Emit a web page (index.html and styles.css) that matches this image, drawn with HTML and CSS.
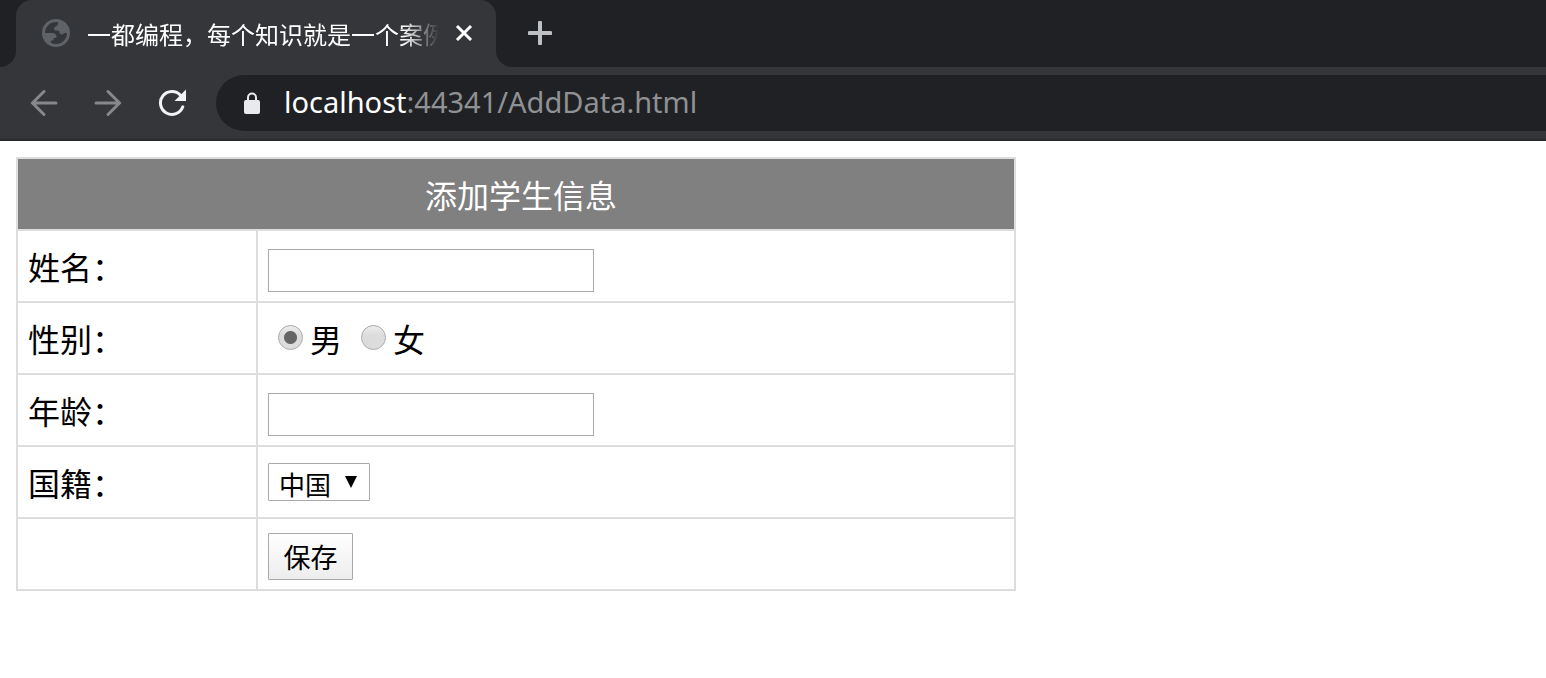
FILE: index.html
```html
<!DOCTYPE html>
<html lang="zh-CN">
<head>
<meta charset="utf-8">
<title>添加学生信息</title>
<link rel="stylesheet" href="styles.css">
</head>
<body>
<header class="browser">
  <div class="tabs">
    <div class="tabs-start"></div>
    <div class="tab-slot">
      <div class="tab">
        <svg class="globe" viewBox="0 0 28 28" aria-hidden="true">
          <circle cx="14" cy="14" r="12.500" fill="none" stroke="#5f6368" stroke-width="3"/>
          <path d="M16 2V4Q16 7 13.500 7.500Q12 8 12 10Q12 11.500 14 11.500H16Q17.500 11.500 17.500 13Q17.500 15.500 20 15.500Q21 15.500 21.500 14.500Q22 14 23 14H26A12 12 0 0 0 16 2Z" fill="#5f6368"/>
          <path d="M2 14H10Q14.500 14 14.500 18Q14.500 19 13 19H12Q11.500 19 11.500 20V21.500H9V25Q3 22 2 14Z" fill="#5f6368"/>
        </svg>
        <span class="tab-title">一都编程，每个知识就是一个案例</span>
        <button class="icon-button" aria-label="关闭标签页">
          <svg width="18" height="18" viewBox="0 0 18 18"><path d="M2 2 16 16M16 2 2 16" stroke="#fff" stroke-width="3"/></svg>
        </button>
      </div>
    </div>
    <div class="tabs-rest">
      <button class="icon-button" aria-label="新标签页">
        <svg width="24" height="24" viewBox="0 0 24 24"><path d="M12 1.500V22.500M1.500 12H22.500" stroke="#bdc1c6" stroke-width="4" stroke-linecap="round"/></svg>
      </button>
    </div>
  </div>
  <nav class="toolbar">
    <button class="icon-button" aria-label="后退">
      <svg width="28" height="28" viewBox="0 0 28 28"><path d="M26 14H3M14 2.500 2.500 14 14 25.500" fill="none" stroke="#86888a" stroke-width="3" stroke-linecap="round"/></svg>
    </button>
    <button class="icon-button" aria-label="前进">
      <svg width="28" height="28" viewBox="0 0 28 28"><path d="M2 14H25M14 2.500 25.500 14 14 25.500" fill="none" stroke="#86888a" stroke-width="3" stroke-linecap="round"/></svg>
    </button>
    <button class="icon-button" aria-label="重新加载">
      <svg width="28" height="28" viewBox="0 0 28 28"><path d="M24.800 17.800A11.500 11.500 0 1 1 22.500 6.200" fill="none" stroke="#f1f3f4" stroke-width="3" stroke-linecap="round"/><path d="M28 .5V12H16.500Z" fill="#f1f3f4"/></svg>
    </button>
    <div class="address">
      <svg width="16" height="22" viewBox="0 0 16 22" aria-hidden="true"><path d="M4 9V5.500a4 4 0 0 1 8 0V9" fill="none" stroke="#e8eaed" stroke-width="2"/><rect y="8" width="16" height="14" rx="2" fill="#e8eaed"/></svg>
      <span class="url"><span class="host">localhost</span>:44341/AddData.html</span>
    </div>
  </nav>
</header>
<main class="page">
  <form>
    <table class="student">
      <colgroup><col class="label-col"><col></colgroup>
      <tr><th colspan="2">添加学生信息</th></tr>
      <tr>
        <td><label for="name">姓名：</label></td>
        <td class="text-cell"><input class="text" type="text" id="name"></td>
      </tr>
      <tr>
        <td>性别：</td>
        <td>
          <div class="radios">
            <label class="choice"><input type="radio" name="sex" checked>男</label>
            <label class="choice"><input type="radio" name="sex">女</label>
          </div>
        </td>
      </tr>
      <tr>
        <td><label for="age">年龄：</label></td>
        <td class="text-cell"><input class="text" type="text" id="age"></td>
      </tr>
      <tr>
        <td><label for="country">国籍：</label></td>
        <td class="select-cell">
          <div class="select-box">
            <select id="country"><option>中国</option></select>
            <svg class="arrow" viewBox="0 0 12 12" aria-hidden="true"><path d="M0 0H12L6 12Z"/></svg>
          </div>
        </td>
      </tr>
      <tr>
        <td></td>
        <td><button class="save" type="button">保存</button></td>
      </tr>
    </table>
  </form>
</main>
</body>
</html>
```
FILE: styles.css
```css
* { box-sizing: border-box; }

body {
  margin: 0;
  background: #fff;
  color: #000;
  font-family: "Noto Sans", "Noto Sans CJK SC", sans-serif;
}

button, input, select { font-family: inherit; }

.browser {
  background: #35363a;
  border-bottom: 2px solid #28292b;
}

.tabs {
  display: flex;
  height: 67px;
}

.tabs-start {
  width: 16px;
  background: #202124;
  border-bottom-right-radius: 16px;
}

.tab-slot {
  width: 480px;
  background: linear-gradient(#202124 50%, #35363a 50%);
}

.tab {
  display: flex;
  align-items: center;
  height: 66px;
  padding: 0 23px 0 26px;
  border-radius: 16px 16px 0 0;
  background: #35363a;
}

.globe {
  width: 28px;
  height: 28px;
  flex: none;
}

.tab-title {
  flex: 1;
  margin: 0 16px 0 17px;
  overflow: hidden;
  color: #fff;
  font-size: 24px;
  white-space: nowrap;
  -webkit-mask-image: linear-gradient(to right, #000 calc(100% - 36px), transparent);
  mask-image: linear-gradient(to right, #000 calc(100% - 36px), transparent);
}

.tabs-rest {
  display: flex;
  flex: 1;
  align-items: center;
  padding: 0 0 1px 32px;
  background: #202124;
  border-bottom-left-radius: 16px;
}

.icon-button {
  display: flex;
  flex: none;
  padding: 0;
  border: 0;
  background: none;
}

.toolbar {
  display: flex;
  align-items: center;
  gap: 36px;
  padding: 8px 0 8px 30px;
}

.address {
  display: flex;
  flex: 1;
  align-items: center;
  gap: 24px;
  height: 56px;
  margin-left: -6px;
  padding-left: 28px;
  border-radius: 28px 0 0 28px;
  background: #202124;
}

.url {
  color: #8f9194;
  font-size: 29px;
  line-height: 54px;
  padding-bottom: 2px;
  white-space: nowrap;
}

.host { color: #fff; }

.page { padding: 16px; }

.student {
  width: 100%;
  max-width: 1000px;
  border-collapse: collapse;
  table-layout: fixed;
  font-size: 32px;
  line-height: 48px;
}

.label-col { width: 240px; }

.student th,
.student td {
  height: 72px;
  padding: 4px 10px 0;
  border: 2px solid #ddd;
  text-align: left;
}

.student th {
  padding-right: 0;
  background: #808080;
  color: #fff;
  font-weight: 400;
  text-align: center;
}

.student .text-cell { padding-top: 8px; }
.student .select-cell { padding-top: 0; }

.text {
  display: block;
  width: 326px;
  height: 43px;
  padding: 2px 4px;
  border: 1px solid #a9a9a9;
  font-size: 26px;
}

.radios {
  display: flex;
  gap: 19px;
  padding-left: 10px;
}

.choice {
  display: flex;
  align-items: center;
  gap: 7px;
}

.choice input {
  width: 25px;
  height: 25px;
  margin: 0 0 5px;
  appearance: none;
  border: 1px solid #adadad;
  border-radius: 50%;
  background: linear-gradient(#ededed, #dcdcdc 40%);
}

.choice input:checked {
  background: radial-gradient(circle, #666 6px, transparent 7px), linear-gradient(#ededed, #dcdcdc 40%);
}

.select-box {
  display: grid;
  width: 102px;
  align-items: center;
}

.select-box > * { grid-area: 1 / 1; }

.select-box select {
  height: 38px;
  padding: 6px 0 0 10px;
  appearance: none;
  border: 1px solid #a9a9a9;
  border-radius: 1px;
  background: #fff;
  color: #000;
  font-size: 26px;
  line-height: 30px;
}

.arrow {
  width: 12px;
  height: 12px;
  margin-right: 13px;
  justify-self: end;
  pointer-events: none;
}

.save {
  display: block;
  width: 85px;
  height: 47px;
  padding: 0;
  border: 1px solid #a9a9a9;
  border-radius: 1px;
  background: linear-gradient(#fff, #ededed);
  color: #000;
  font-size: 27px;
}
```
